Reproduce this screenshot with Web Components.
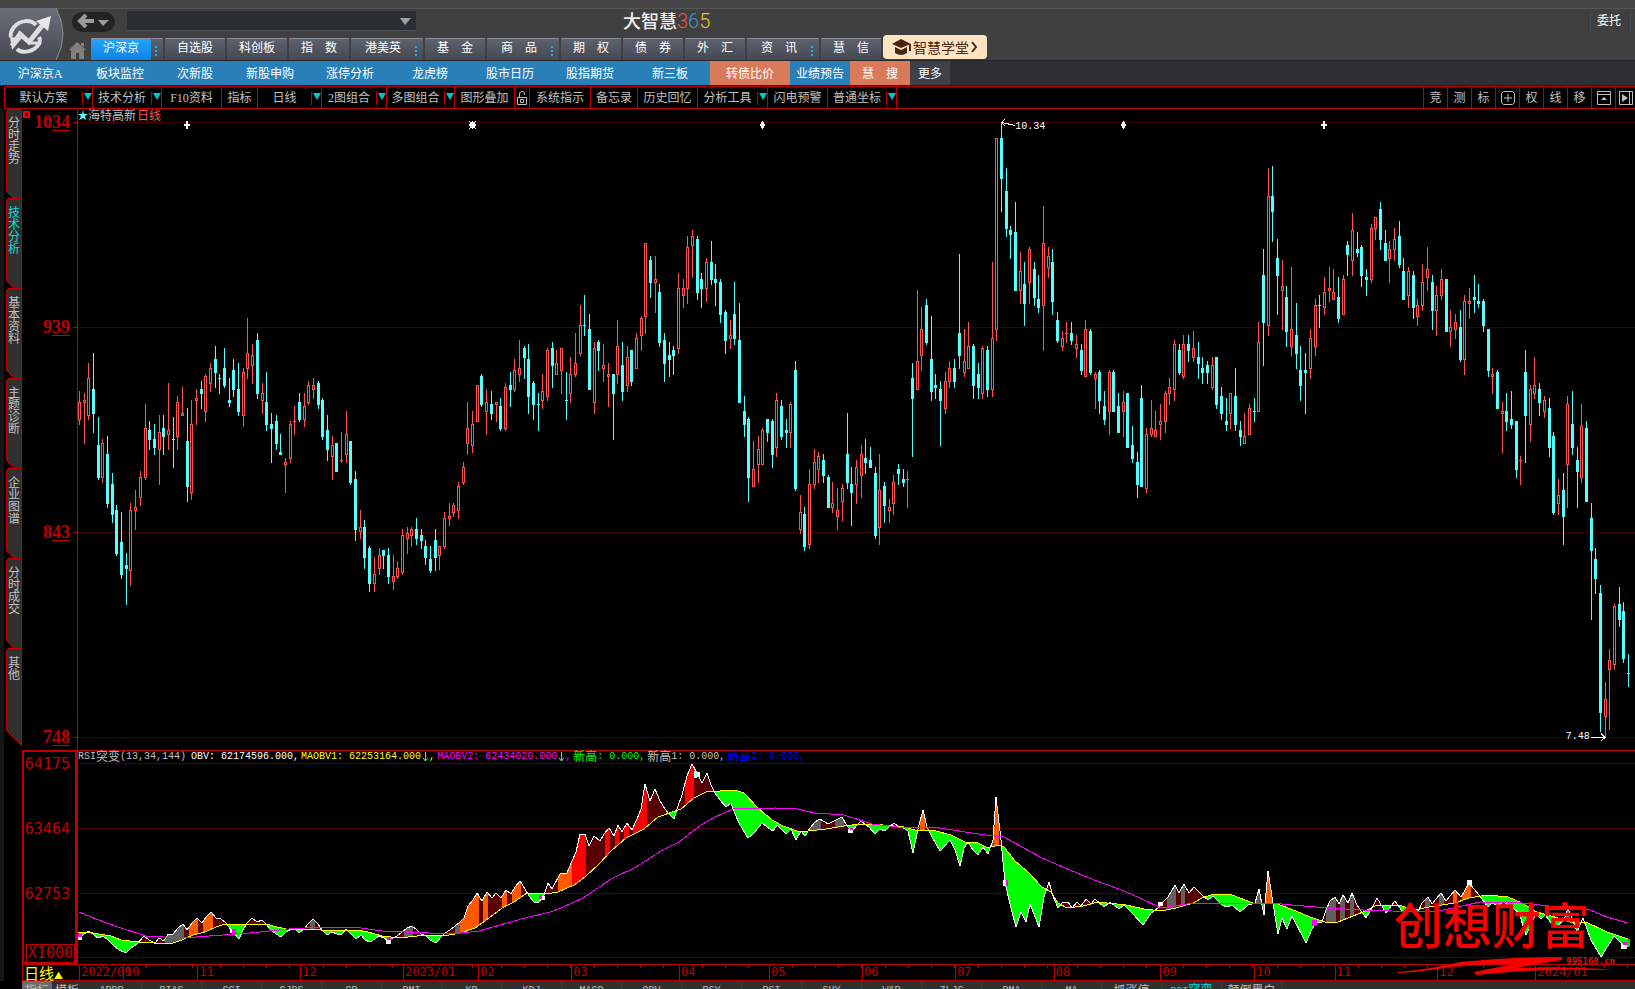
<!DOCTYPE html>
<html lang="zh-CN">
<head>
<meta charset="utf-8">
<title>大智慧365</title>
<style>
  html, body {
    margin: 0;
    height: 100%;
    background: #000;
    overflow: hidden;
  }
</style>
</head>
<body>
<dzh-app></dzh-app>

<script>
const FONT = '"Liberation Serif", "Noto Sans CJK SC", sans-serif';
const MONO = '"Liberation Mono", "Noto Sans CJK SC", monospace';

class DzhTab extends HTMLElement {
  constructor() {
    super();
    this.attachShadow({ mode: 'open' });
  }

  connectedCallback() {
    const more = this.hasAttribute('more') ? '<i></i>' : '';
    this.shadowRoot.innerHTML = `
      <style>
        :host {
          display: flex;
          flex: 0 0 60px;
          height: 22px;
          box-sizing: border-box;
          border-top: 1px solid #8a8d96;
          background: linear-gradient(#5e626d, #444853);
        }
        :host([more]) {
          flex-basis: 72px;
        }
        :host([active]) button {
          background: linear-gradient(#25a4f5, #0d84e8);
        }
        button {
          flex: 0 0 60px;
          padding: 0 0 4px;
          border: 0;
          background: none;
          color: #fff;
          font: 12px/16px ${FONT};
          white-space: pre;
        }
        :host([more]:not([active])) button {
          flex-basis: 64px;
        }
        i {
          width: 2px;
          height: 10px;
          margin: 7px 0 0 4px;
          background: repeating-linear-gradient(#18b4f0 0 2px, transparent 2px 4px);
        }
        :host([more]:not([active])) i {
          margin-left: 0;
        }
      </style>
      <button type="button"><slot></slot></button>${more}
    `;
  }
}

class DzhHeader extends HTMLElement {
  constructor() {
    super();
    this.attachShadow({ mode: 'open' });
  }

  connectedCallback() {
    this.shadowRoot.innerHTML = `
      <style>
        :host {
          display: flex;
          height: 61px;
          box-sizing: border-box;
          padding-top: 8px;
          border-bottom: 1px solid #25272a;
          background: linear-gradient(#444 8px, #555 8px, #555 9px, #404040 9px);
          font: 12px/16px ${FONT};
          color: #fff;
        }
        .logo {
          flex: 0 0 65px;
          height: 52px;
        }
        .main {
          flex: 1;
          min-width: 0;
        }
        .row {
          display: flex;
          height: 30px;
        }
        .history {
          display: flex;
          align-items: center;
          justify-content: center;
          width: 43px;
          height: 20px;
          margin: 4px 12px 0 7px;
          padding: 0;
          border: 0;
          border-radius: 10px;
          background: #232323;
        }
        .address {
          position: relative;
          width: 289px;
          height: 20px;
          margin-top: 3px;
        }
        select {
          width: 100%;
          height: 20px;
          appearance: none;
          border: 0;
          border-bottom: 1px solid #4a545c;
          background: #2b2f33;
        }
        .address svg {
          position: absolute;
          right: 5px;
          top: 7px;
          pointer-events: none;
        }
        h1 {
          flex: 1;
          margin: 1px 0 0 207px;
          color: #eee;
          font: 500 18px/22px "Noto Sans CJK SC", sans-serif;
        }
        h1 span {
          font: 300 20px/22px Roboto, sans-serif;
        }
        .trade {
          height: 25px;
          margin-right: 4px;
          padding: 0 9px 0 6px;
          border: 0;
          border-left: 1px solid #434b53;
          border-right: 1px solid #434b53;
          background: none;
          color: #fff;
          font: 12px/16px ${FONT};
        }
        nav {
          display: flex;
          gap: 2px;
          align-items: flex-end;
          height: 22px;
        }
        .home {
          width: 17px;
          height: 18px;
          margin: 0 3px 1px 4px;
        }
        .school {
          display: flex;
          align-items: center;
          height: 24px;
          margin-bottom: 1px;
          padding: 0 9px 0 8px;
          border: 0;
          border-radius: 4px;
          background: #fde5c3;
          color: #4a2410;
          font: 14px/20px "Noto Sans CJK SC", sans-serif;
        }
        .school svg:last-child {
          margin-left: 1px;
        }
      </style>
      <svg class="logo" viewBox="0 0 65 52">
        <defs>
          <linearGradient id="lg" x1="0" y1="0" x2="0" y2="1">
            <stop offset="0" stop-color="#6b6f78"/><stop offset="1" stop-color="#45484f"/>
          </linearGradient>
        </defs>
        <path d="M0 0H56Q70 26 56 52H0Z" fill="url(#lg)"/>
        <path d="M56 0Q70 26 56 52" fill="none" stroke="#888c92"/>
        <g fill="none" stroke="#dcdde0" stroke-width="4">
          <path d="M36 17C31 11 20 12 14 19 11 23 10 26 11 29"/>
          <path d="M17 41C22 46 34 44 39 36 40 34 40 31 39 29"/>
          <path d="M12 38L20 26 29 34 45 14" stroke-width="5"/>
          <path d="M28 35H41" stroke-width="3"/>
        </g>
        <path d="M36 13L51 8 48 23Z" fill="#e6e7ea"/>
        <path d="M10 29L22 30 12 42Z" fill="#dcdde0"/>
      </svg>
      <div class="main">
        <div class="row">
          <button class="history" type="button" aria-label="后退">
            <svg width="33" height="18" viewBox="0 0 33 18">
              <path d="M9 2L3 8 9 14M3 8H17" fill="none" stroke="#999" stroke-width="4"/>
              <path d="M21 7H32L26 13Z" fill="#999"/>
            </svg>
          </button>
          <div class="address">
            <select aria-label="地址"><option></option></select>
            <svg width="11" height="7" viewBox="0 0 11 7"><path d="M0 0H11L5 7Z" fill="#a0a0a0"/></svg>
          </div>
          <h1>大智慧<span style="color:#e2554d">3</span><span style="color:#3498db">6</span><span style="color:#ecc51c">5</span></h1>
          <button class="trade" type="button">委托</button>
        </div>
        <nav>
          <svg class="home" viewBox="0 0 17 18"><path d="M8 1L17 9H15V18H10V12H7V18H2V9H0ZM12 2H15V6L12 4Z" fill="#808080"/></svg>
          <dzh-tab active more>沪深京</dzh-tab>
          <dzh-tab>自选股</dzh-tab>
          <dzh-tab>科创板</dzh-tab>
          <dzh-tab>指　数</dzh-tab>
          <dzh-tab more>港美英</dzh-tab>
          <dzh-tab>基　金</dzh-tab>
          <dzh-tab more>商　品</dzh-tab>
          <dzh-tab>期　权</dzh-tab>
          <dzh-tab>债　券</dzh-tab>
          <dzh-tab>外　汇</dzh-tab>
          <dzh-tab more>资　讯</dzh-tab>
          <dzh-tab>慧　信</dzh-tab>
          <button class="school" type="button">
            <svg width="22" height="18" viewBox="0 0 22 18" fill="#4a2410">
              <path d="M1 6L10 1 20 6 10 10ZM4 9L10 12 16 9V15Q10 19 4 15ZM18 6H20V13H18Z"/>
            </svg>智慧学堂
            <svg width="8" height="14" viewBox="0 0 8 14"><path d="M2 2L6 7 2 12" fill="none" stroke="#4a2410" stroke-width="2"/></svg>
          </button>
        </nav>
      </div>
    `;
  }
}

class DzhSubnav extends HTMLElement {
  constructor() {
    super();
    this.attachShadow({ mode: 'open' });
  }

  connectedCallback() {
    this.shadowRoot.innerHTML = `
      <style>
        :host {
          display: flex;
          height: 25px;
          box-sizing: border-box;
          border-bottom: 1px solid #1d1f22;
          background: #2c2f34;
          font: 12px/24px ${FONT};
        }
        a {
          flex: 0 0 80px;
          box-sizing: border-box;
          height: 24px;
          padding-top: 1px;
          background: #2980b9;
          color: #fff;
          text-align: center;
          text-decoration: none;
        }
        .w70 { flex-basis: 70px; }
        .w60 { flex-basis: 60px; }
        .w40 { flex-basis: 40px; background: #3e4248; }
        .hot { background: #d97b5b; }
      </style>
      <a href="#">沪深京A</a>
      <a href="#">板块监控</a>
      <a href="#" class="w70">次新股</a>
      <a href="#">新股申购</a>
      <a href="#">涨停分析</a>
      <a href="#">龙虎榜</a>
      <a href="#">股市日历</a>
      <a href="#">股指期货</a>
      <a href="#">新三板</a>
      <a href="#" class="hot">转债比价</a>
      <a href="#" class="w60">业绩预告</a>
      <a href="#" class="w60 hot">慧　搜</a>
      <a href="#" class="w40">更多</a>
    `;
  }
}

class DzhToolbar extends HTMLElement {
  constructor() {
    super();
    this.attachShadow({ mode: 'open' });
  }

  connectedCallback() {
    // [label, width, has drop-down]
    const tools = [
      ['默认方案', 88, 1], ['技术分析', 69, 1], ['F10资料', 60], ['指标', 36], ['日线', 64, 1],
      ['2图组合', 65, 1], ['多图组合', 68, 1], ['图形叠加', 60], ['lock', 15], ['系统指示', 61],
      ['备忘录', 47], ['历史回忆', 60], ['分析工具', 70, 1], ['闪电预警', 60], ['普通坐标', 69, 1]
    ];
    const right = ['竞', '测', '标', 'plus', '权', '线', '移', 'up', 'next'];
    const icons = {
      lock: '<svg width="12" height="16"><path d="M3.500 7V4Q3.500 1.500 6 1.500T8.500 4V5M1.500 7.500H10.500V14.500H1.500ZM4.500 9.500H7.500V12.500H4.500Z"/></svg>',
      plus: '<svg width="14" height="14"><path d="M2.500.5H11.500L13.500 2.500V11.500L11.500 13.500H2.500L.5 11.500V2.500ZM7 3V11M3 7H11"/></svg>',
      up: '<svg width="14" height="14"><path d="M.5.5H13.500V13.500H.5ZM0 3.500H14"/><path d="M4 9H10L7 6Z" class="solid"/></svg>',
      next: '<svg width="14" height="14"><path d="M.5.5H13.500V13.500H.5ZM10.500 0V14"/><path d="M3 3L9 7 3 11Z" class="solid"/></svg>'
    };
    const label = t => icons[t] || t;
    const aria = t => icons[t] ? ` aria-label="${t}"` : '';
    this.shadowRoot.innerHTML = `
      <style>
        :host {
          display: flex;
          justify-content: space-between;
          height: 23px;
          box-sizing: border-box;
          margin-left: 4px;
          border: solid #c00000;
          border-width: 1px 0 1px 1px;
          overflow: hidden;
        }
        div {
          display: flex;
        }
        button {
          display: flex;
          box-sizing: border-box;
          align-items: center;
          justify-content: center;
          padding: 1px 0 0;
          border: 0;
          border-right: 1px solid #c00000;
          background: none;
          color: #c0c0c0;
          font: 12px/20px ${FONT};
        }
        button span {
          flex: 1;
        }
        .arrow {
          flex: 0 0 9px;
          height: 13px;
          border-left: 1px solid #c00000;
        }
        .right button {
          width: 24px;
          border-right: 0;
          border-left: 1px solid #c00000;
        }
        .right button:last-child {
          width: 20px;
        }
        svg {
          fill: none;
          stroke: #c0c0c0;
        }
        .solid, .arrow path {
          stroke: none;
          fill: #c0c0c0;
        }
        .arrow path {
          fill: #00c8c8;
        }
      </style>
      <div>${tools.map(([t, w, drop]) => `<button type="button" style="width:${w}px"${aria(t)}>` +
        (drop ? `<span>${t}</span><svg class="arrow" viewBox="0 0 9 13"><path d="M1 1H9L5 8Z"/></svg>` : label(t)) +
        '</button>').join('')}</div>
      <div class="right">${right.map(t => `<button type="button"${aria(t)}>${label(t)}</button>`).join('')}</div>
    `;
  }
}

class DzhSideTabs extends HTMLElement {
  constructor() {
    super();
    this.attachShadow({ mode: 'open' });
  }

  connectedCallback() {
    const tabs = ['分时走势', '技术分析', '基本资料', '主题诊断', '企业图谱', '分时成交', '其他'];
    this.shadowRoot.innerHTML = `
      <style>
        :host {
          display: block;
          flex: 0 0 22px;
          box-sizing: border-box;
          padding-left: 6px;
          background: linear-gradient(90deg, #161616 4px, #000 4px);
        }
        button {
          position: relative;
          display: block;
          width: 16px;
          height: 90px;
          padding: 8px 1px 0 2px;
          border: 0;
          background: none;
          color: #c0c0c0;
          font: 12px/12px ${FONT};
          text-align: left;
        }
        button:first-of-type {
          height: 89px;
          padding-top: 7px;
        }
        span {
          position: relative;
          display: block;
          width: 12px;
          height: 81px;
          word-break: break-all;
        }
        .active {
          color: #00e0e0;
        }
        svg {
          position: absolute;
          left: 0;
          top: 0;
          overflow: visible;
          fill: #303030;
          stroke: #c00000;
        }
      </style>
      ${tabs.map((t, i) => `<button type="button"${i === 1 ? ' class="active"' : ''}>
        <svg width="16" height="98"><path d="M15.500.5H2L.5 2.500V82.500L15.500 97.500Z"/></svg><span>${t}</span></button>`).join('')}
    `;
  }
}

const SVG_W = 1557;
const LEFT = 78;
// distance between two trading days
const STEP = 4.68;

// u = close above open, d = close below; then high, body top, body bottom, low
const CANDLES = `
u391 402 420 425,u393 400 403 444,u363 378 416 420,d353 389 414 433,d417 445 478 480,u439 443 478 483,
d436 454 504 508,d473 484 515 523,d505 510 554 556,d512 542 575 579,d553 565 569 605,u503 510 571 586,
u490 507 511 530,u471 477 498 506,u404 428 478 480,d421 430 440 450,d424 439 448 455,u415 432 450 485,
d415 428 437 455,u383 430 435 450,d417 439 440 468,u396 402 437 450,u387 413 416 416,d408 441 487 502,
u400 424 493 500,u389 398 401 425,d381 389 394 409,u374 376 412 422,u363 368 384 392,d346 359 373 388,
d374 378 379 394,d348 368 386 388,d378 400 403 407,d359 370 390 397,d363 389 412 416,u368 372 416 427,
u318 353 369 379,u344 355 366 384,d333 340 394 399,u383 393 401 414,d372 402 425 431,d413 424 429 463,
d415 421 444 450,d434 452 455 455,u458 462 465 493,u421 424 459 463,u406 421 422 435,d393 402 420 422,
u393 406 420 427,u381 385 403 405,u378 385 390 399,d381 383 405 409,d398 400 437 440,d415 430 450 461,
u436 445 457 480,d443 443 472 472,u432 460 461 463,u411 434 455 463,d441 441 483 485,d471 479 530 541,
u510 527 532 539,d520 527 558 569,d546 548 584 592,u557 574 584 592,u548 555 569 575,d550 550 556 569,
d548 555 577 584,u555 576 582 590,u561 568 577 579,u529 535 573 575,u527 533 539 554,u527 529 536 547,
d518 529 539 545,d529 535 541 549,d540 546 558 565,d546 559 571 573,d529 540 558 571,u546 546 556 570,
u512 518 547 549,u503 516 519 526,u503 505 513 517,u482 486 511 519,u462 467 483 485,u402 428 444 455,
u411 424 446 453,u385 385 422 422,d374 376 405 407,u389 402 412 435,d391 404 414 420,u402 402 405 422,
d398 406 429 431,u383 387 429 431,d372 385 390 407,u359 370 390 392,u340 368 375 382,d346 348 358 379,
d344 359 397 414,d381 383 405 420,d393 404 405 431,u374 391 401 409,u348 350 397 401,d342 348 366 388,
u350 363 375 375,u348 348 371 394,d372 400 401 420,u357 374 394 403,u333 363 375 377,u305 325 354 356,
d295 325 326 336,d314 329 390 390,u342 348 403 414,d340 342 351 371,u344 365 369 382,u363 374 377 407,
d374 374 394 440,u320 346 375 384,d342 365 392 401,u346 357 386 392,d350 350 382 386,u333 338 369 369,
u316 318 336 351,u243 243 317 334,d256 260 283 298,u256 279 283 313,d284 292 343 347,d333 340 364 382,
d342 355 360 377,d346 350 356 375,u273 288 349 354,u279 288 296 308,u236 247 289 304,u230 236 246 278,
d236 239 293 300,d273 279 289 308,u258 262 289 302,d241 262 280 285,d264 279 283 306,d279 282 315 323,
d310 312 341 354,u320 335 339 349,d282 314 339 345,d303 340 403 403,d396 411 425 437,d417 419 478 502,
u441 469 487 487,u436 449 465 483,u428 430 465 465,d419 419 433 442,d419 421 455 468,u393 400 448 457,
d400 406 437 440,d419 430 433 448,u402 404 433 448,d361 370 489 491,u495 512 530 534,d507 514 547 551,
u469 484 545 549,u449 462 485 489,u452 456 470 483,d454 460 476 483,d475 477 508 508,u482 503 508 513,
u488 510 517 530,u484 488 502 521,d413 454 483 489,d467 484 493 526,u460 467 485 504,u445 454 476 498,
d439 458 463 474,d447 460 468 468,d467 473 536 539,u454 490 528 545,d482 486 506 523,u499 507 511 523,
u475 482 504 515,d464 469 474 485,d469 479 483 487,u471 479 480 508,d363 378 399 457,u290 361 390 390,
u307 329 356 371,d299 305 343 345,d316 359 392 401,d374 385 388 399,d381 389 401 446,u372 381 409 414,
u361 368 382 388,d359 368 382 388,d254 333 356 369,u329 361 373 377,u322 346 369 369,d344 346 386 399,
d363 374 388 399,u346 348 394 399,d346 350 390 397,u262 338 390 397,u138 138 330 341,d123 138 179 212,
d168 191 229 237,d226 230 235 259,d202 232 291 291,u252 271 291 304,d262 284 304 326,u247 249 283 304,
d262 269 298 306,d275 299 308 313,u206 243 306 351,u247 256 268 278,d249 262 302 315,d312 320 341 343,
u331 338 347 351,u322 333 334 343,d322 333 341 345,u335 344 349 358,d344 350 371 375,u320 329 377 377,
d329 331 373 375,u372 374 379 409,d370 372 401 414,d391 406 420 425,u370 372 412 435,d370 372 412 412,
d393 406 433 433,u391 402 412 437,d393 393 448 448,d426 445 459 463,d452 462 485 498,d385 398 487 487,
u428 434 489 493,u400 428 435 437,u411 430 437 437,u404 421 425 440,u391 393 422 433,u378 387 394 405,
u340 344 390 401,d344 350 373 375,u335 344 377 379,d335 344 351 362,u331 348 358 362,d342 357 364 379,
d357 368 373 384,d361 365 373 384,u357 365 388 390,d357 357 405 409,d387 396 414 420,d398 421 425 431,
u393 393 414 429,d368 396 425 431,d421 430 437 446,u413 436 444 444,u404 408 435 435,d398 411 412 422,
u322 342 412 412,d249 275 323 366,u168 196 326 336,d166 196 212 242,d239 258 276 315,u260 286 291 330,
d286 297 332 347,u267 329 347 356,d303 335 354 369,d346 370 386 401,d353 370 373 414,u329 338 369 379,
u299 305 347 356,d295 305 306 328,u277 292 308 315,u267 288 291 302,u269 292 300 300,d277 297 319 323,
u275 279 315 315,d241 245 255 276,u213 230 261 276,d232 249 253 257,d245 247 276 287,d269 277 280 296,
u224 228 280 283,u217 217 229 240,d202 209 240 250,d230 243 261 261,u241 249 259 283,u228 239 250 261,
d221 236 265 268,d258 271 300 300,u267 271 296 308,d271 275 308 319,u299 305 317 326,u264 282 306 311,
u247 269 278 291,d275 282 311 330,u286 295 311 336,u269 279 296 300,d279 279 332 332,u310 327 332 347,
u314 322 330 339,d310 327 360 362,u295 301 360 375,u288 301 304 319,d275 297 300 313,d284 301 304 308,
d299 301 326 332,d329 329 371 377,u368 374 377 394,d370 372 409 409,u402 411 414 453,d393 411 422 431,
d391 419 425 429,d421 421 470 478,u456 460 461 485,d350 372 416 463,u385 389 425 442,u357 385 394 399,
d383 389 403 416,u396 400 412 418,d398 408 448 457,d432 436 513 515,u479 495 504 515,d473 490 517 545,
u396 404 465 508,d391 424 448 455,d447 460 472 508,u404 426 478 483,d421 428 502 502,d503 518 551 620,
d548 559 579 594,d585 593 713 732,u682 699 717 737,u649 660 670 730,u604 606 665 670,d587 604 620 627,
d602 611 659 663,d654 673 674 687`.trim().split(/,\s*/);

class PriceChart extends HTMLElement {
  constructor() {
    super();
    this.attachShadow({ mode: 'open' });
  }

  candles() {
    let up = '';
    let down = '';
    CANDLES.forEach((c, i) => {
      const x = 79 + Math.round(i * STEP);
      const [hi, top, bot, lo] = c.slice(1).split(' ').map(Number);
      const wick = (a, b) => b > a ? `M${x} ${a}h1V${b}h-1Z` : '';
      const body = `M${x - 1} ${top}h3V${bot}h-3Z`;
      if (c[0] === 'u') {
        const hole = bot - top > 2 ? `M${x} ${top + 1}V${bot - 1}h1V${top + 1}Z` : '';
        up += wick(hi, top) + body + hole + wick(bot, lo);
      } else {
        down += wick(hi, top) + body + wick(bot, lo);
      }
    });
    return `<path fill="#ff5454" fill-rule="evenodd" d="${up}"/><path fill="#54ffff" d="${down}"/>`;
  }

  connectedCallback() {
    this.shadowRoot.innerHTML = `
      <style>
        :host {
          display: flex;
          min-height: 0;
          color: #c0c0c0;
          font: 12px/12px ${FONT};
        }
        .axis {
          position: relative;
          display: flex;
          flex: 0 0 56px;
          flex-direction: column;
          justify-content: space-between;
          align-items: flex-end;
          box-sizing: border-box;
          border-right: 1px solid #c00000;
          color: #c00000;
          font: bold 18px/26px "Liberation Serif", serif;
        }
        .axis span {
          display: flex;
          align-items: center;
        }
        .axis span::after {
          content: "";
          width: 4px;
          height: 1px;
          margin-left: 3px;
          background: #c00000;
        }
        .axis u {
          text-decoration-thickness: 1px;
          text-underline-offset: 2px;
        }
        .dot {
          position: absolute;
          left: 1px;
          top: 2px;
          width: 3px;
          height: 3px;
          border: 2px solid #f00;
        }
        .plot {
          position: relative;
          flex: 1;
          min-width: 0;
        }
        .plot > svg {
          display: block;
          width: 100%;
          height: 100%;
        }
        h2 {
          position: absolute;
          left: 0;
          top: 0;
          display: flex;
          margin: 0;
          font: 12px/14px ${FONT};
        }
        h2 b {
          margin-left: 1px;
          color: #ff5454;
          font-weight: normal;
        }
        .tag {
          position: absolute;
          color: #fff;
          font: 10px/10px ${MONO};
        }
        .high { left: 60.2%; top: 2%; }
        .low { right: 2.9%; bottom: 1.2%; }
      </style>
      <div class="axis">
        <i class="dot"></i>
        <span>10<u>34</u></span><span>9<u>39</u></span><span>8<u>43</u></span><span>7<u>48</u></span>
      </div>
      <div class="plot">
        <svg viewBox="${LEFT} 109 ${SVG_W} 641" preserveAspectRatio="none" shape-rendering="crispEdges">
          <path d="M78 122.500H1635M78 327.500H1635M78 532.500H1635M78 737.500H1635" stroke="#400000"/>
          ${this.candles()}
          <g fill="#fff">
            <path d="M184 124h2v-3h2v3h2v2h-2v3h-2v-3h-2Z"/>
            <path d="M470 122h5v6h-5ZM472 121h1v8h-1ZM469 124h7v2h-7ZM469 121h1v1h-1ZM475 121h1v1h-1ZM469 128h1v1h-1ZM475 128h1v1h-1Z"/>
            <path d="M762 121h1v1h1v2h1v2h-1v2h-1v1h-1v-1h-1v-2h-1v-2h1v-2h1Z"/>
            <path d="M1123 121h1v1h1v2h1v2h-1v2h-1v1h-1v-1h-1v-2h-1v-2h1v-2h1Z"/>
            <path d="M1321 124h2v-3h2v3h2v2h-2v3h-2v-3h-2Z"/>
          </g>
          <path d="M1005 119L1002 122.500 1005 126M1002 122.500L1015 125.500M1591 737.500H1605M1601 733.500L1605 737.500 1601 741" fill="none" stroke="#fff"/>
        </svg>
        <h2><svg width="10" height="12"><path d="M5 1L6 5H10L7 7 8 11 5 9 1 11 3 7 0 5H4Z" fill="#54ffff"/></svg>海特高新<b>日线</b></h2>
        <span class="tag high">10.34</span>
        <span class="tag low">7.48</span>
      </div>
    `;
  }
}

const points = s => s.trim().split(/\s+/).map(p => p.split(',').map(Number));

const OBV = points(`
79,939 84,934 89,931 94,935 98,938 103,936 108,940 113,945 119,950 126,953 131,948 137,944 144,936 149,940
155,943 159,938 164,941 168,934 173,934 178,928 183,924 187,930 192,923 197,918 202,923 206,917 211,912 216,918
221,919 226,923 231,930 239,939 243,930 247,923 252,918 257,922 262,920 266,924 271,930 276,934 281,937 286,932
290,930 295,929 299,933 304,929 308,924 313,919 318,924 322,930 327,935 332,932 337,934 342,934 346,929 351,934
356,939 361,935 365,940 370,942 375,939 379,936 384,938 388,941 393,938 397,936 402,932 407,928 412,926 417,930
421,934 426,936 430,940 436,943 441,937 445,933 450,930 455,926 460,922 464,918 468,906 473,900 477,893 482,901
487,892 492,898 496,893 501,898 506,890 511,894 515,887 520,881 525,889 529,896 534,902 539,902 544,895 548,883
552,889 560,874 567,873 572,861 576,852 580,834 585,834 589,846 594,836 600,841 604,834 609,828 614,836 618,825
622,832 627,823 632,830 637,819 641,809 645,784 650,801 655,789 660,801 665,809 669,814 674,819 678,806 682,795
687,776 692,764 697,773 702,783 707,773 711,785 715,793 720,800 726,807 731,803 735,814 739,823 748,838 754,833
762,823 767,827 773,831 777,825 782,830 786,834 791,829 796,840 801,831 805,836 810,828 815,822 820,819 828,824
834,821 842,817 847,826 852,831 857,825 861,821 869,827 875,834 880,829 885,831 889,827 894,823 898,826 903,828
908,831 913,853 918,829 923,810 927,827 932,837 940,851 950,840 955,850 960,866 964,848 968,842 973,850 978,855
983,847 988,854 993,840 996,797 1001,840 1005,883 1011,908 1016,927 1021,912 1026,922 1030,904 1039,927 1044,897
1049,882 1053,896 1058,908 1063,902 1068,902 1072,908 1077,902 1081,906 1086,899 1091,904 1095,899 1104,907
1110,902 1119,909 1124,905 1133,914 1143,925 1151,913 1158,908 1161,904 1168,897 1175,885 1179,893 1184,884
1189,893 1194,887 1202,895 1208,900 1213,896 1222,905 1227,907 1232,905 1240,912 1248,905 1255,903 1259,889
1264,915 1268,871 1273,903 1278,934 1282,918 1287,929 1292,916 1306,943 1312,929 1317,922 1322,922 1326,910
1330,901 1335,897 1339,904 1343,895 1348,903 1352,893 1357,905 1361,911 1366,918 1372,908 1377,898 1386,913
1395,901 1405,915 1409,908 1418,912 1422,903 1428,897 1432,904 1441,893 1446,901 1455,890 1461,897 1469,883
1479,895 1488,907 1492,903 1498,906 1503,902 1510,906 1519,913 1526,935 1536,914 1541,919 1545,915 1555,928
1564,920 1568,908 1573,921 1577,932 1583,918 1591,940 1601,957 1614,936 1622,944 1628,947`);

const MA1 = points(`
78,932 93,933 111,936 121,940 138,942 154,943 173,943 182,940 193,935 205,932 216,927 225,924 266,924 277,927
286,929 314,929 329,931 357,930 368,932 382,936 400,938 425,935 443,936 461,933 475,928 489,918 502,908 514,902
527,893 546,894 558,892 574,885 585,877 599,864 611,851 626,838 644,829 658,817 681,809 694,798 706,792 735,790
744,793 758,808 772,820 783,826 797,831 808,831 826,829 844,826 861,824 883,825 904,827 915,830 936,831 951,835
965,842 976,842 988,848 998,845 1004,847 1015,861 1028,872 1042,887 1051,892 1058,903 1067,908 1083,906 1098,902
1126,905 1144,909 1161,911 1176,908 1193,903 1204,897 1215,894 1232,895 1253,903 1275,903 1296,911 1310,917
1328,923 1338,922 1363,912 1377,905 1399,905 1415,910 1429,907 1455,903 1469,898 1487,895 1508,897 1522,903
1537,912 1558,918 1570,922 1586,922 1607,932 1628,939`);

const MA2 = points(`
79,912 96,919 118,927 146,936 164,937 196,937 250,933 289,929 321,927 354,927 382,931 429,933 461,933 479,931
500,925 525,918 550,912 561,908 583,898 611,879 636,867 661,851 679,842 701,825 715,817 733,809 776,808 797,809
815,813 844,815 872,824 897,827 940,828 965,832 986,835 1004,837 1040,857 1065,868 1094,880 1119,889 1140,898
1161,908 1193,903 1222,903 1271,903 1292,905 1328,908 1363,910 1392,911 1434,912 1462,906 1480,902 1522,903
1558,907 1590,910 1607,917 1628,923`);

// colour runs of the area above the average; everything else is dark red
const RUNS = {
  '#606060': [[165, 184], [310, 315], [404, 413], [455, 460], [810, 821], [835, 844], [991, 994], [1167, 1176],
    [1181, 1185], [1256, 1261], [1326, 1336], [1340, 1345], [1350, 1354], [1425, 1430], [1439, 1444], [1566, 1570]],
  '#ff5a00': [[189, 198], [203, 213], [460, 479], [483, 488], [502, 507], [512, 521], [558, 572], [920, 925],
    [994, 999], [1266, 1272], [1453, 1457], [1462, 1471]],
  '#ff0000': [[572, 586], [605, 610], [615, 619], [624, 629], [633, 647], [685, 694]]
};

class ObvChart extends HTMLElement {
  constructor() {
    super();
    this.attachShadow({ mode: 'open' });
  }

  at(line, x) {
    const i = line.findIndex(p => p[0] >= x);
    if (i <= 0) return line[i < 0 ? line.length - 1 : 0][1];
    const [x0, y0] = line[i - 1];
    const [x1, y1] = line[i];
    return Math.round(y0 + (y1 - y0) * (x - x0) / (x1 - x0));
  }

  area() {
    const paths = {};
    for (let x = 79; x < 1629; x++) {
      const a = this.at(OBV, x);
      const b = this.at(MA1, x);
      let color = '#00ff00';
      if (a < b) {
        color = Object.keys(RUNS).find(k => RUNS[k].some(r => x >= r[0] && x < r[1])) || '#580000';
      }
      paths[color] = (paths[color] || '') + `M${x} ${a}h1V${b}h-1Z`;
    }
    return Object.keys(paths).map(k => `<path fill="${k}" d="${paths[k]}"/>`).join('');
  }

  connectedCallback() {
    const arrow = '<svg width="8" height="12"><path d="M4.500 1V10M2 7L4.500 10 7 7" fill="none" stroke="#54ff54"/></svg>';
    this.shadowRoot.innerHTML = `
      <style>
        :host {
          display: flex;
          min-height: 0;
          color: #c0c0c0;
          font: 10px/12px ${MONO};
        }
        .axis {
          display: flex;
          flex: 0 0 56px;
          flex-direction: column;
          gap: 43px;
          align-items: flex-end;
          box-sizing: border-box;
          padding-top: 1px;
          border: 2px solid #c00000;
          border-right-width: 3px;
          color: #c00000;
          font: 15px/22px "DejaVu Sans Mono", monospace;
        }
        .axis span {
          padding-right: 5px;
        }
        .axis b {
          box-sizing: border-box;
          height: 19px;
          margin-top: -4px;
          padding: 0 1px;
          border: 1px solid #c00000;
          font: 15px/17px "DejaVu Sans Mono", monospace;
        }
        .plot {
          position: relative;
          flex: 1;
          min-width: 0;
          border-top: 1px solid #c00000;
        }
        .plot > svg {
          display: block;
          width: 100%;
          height: 100%;
        }
        .legend {
          position: absolute;
          left: 0;
          top: 0;
          display: flex;
          gap: 2px;
          white-space: pre;
        }
        .legend span {
          display: flex;
        }
        .legend span:first-child {
          margin-right: 3px;
        }
        big {
          font: 12px/12px ${FONT};
        }
      </style>
      <div class="axis"><span>64175</span><span>63464</span><span>62753</span><b>X1000</b></div>
      <div class="plot">
        <svg viewBox="${LEFT} 751 ${SVG_W} 213" preserveAspectRatio="none" shape-rendering="crispEdges">
          <path d="M78 763.500H1635M78 828.500H1635M78 893.500H1635M78 957.500H1635" stroke="#480000"/>
          ${this.area()}
          <g fill="none">
            <polyline points="${OBV.join(' ')}" stroke="#fff"/>
            <polyline points="${MA1.join(' ')}" stroke="#ff0"/>
            <polyline points="${MA2.join(' ')}" stroke="#f0f"/>
          </g>
          <path fill="#fff" d="M78 936h4v4h-4ZM230 929h4v4h-4ZM386 940h5v4h-5ZM541 896h4v4h-4ZM697 772h3v5h-3ZM848 829h5v4h-5ZM1003 880h3v6h-3ZM1158 902h5v4h-5ZM1467 880h5v5h-5ZM1621 944h6v5h-6Z"/>
          <path fill="#f0f" d="M78 934h4v3h-4ZM232 929h4v5h-4ZM387 937h4v3h-4ZM539 895h3v4h-3ZM850 828h3v2h-3ZM1006 880h2v6h-2ZM1312 920h5v6h-5ZM1623 942h5v3h-5Z"/>
          <path fill="#aff" d="M694 771h3v7h-3Z"/>
          <path fill="#00e000" d="M1627 939h3v7h-3Z"/>
        </svg>
        <div class="legend">
          <span>RSI<big>突变</big>(13,34,144)</span>
          <span style="color:#fff">OBV: 62174596.000,</span>
          <span style="color:#ff0">MAOBV1: 62253164.000${arrow},</span>
          <span style="color:#f0f">MAOBV2: 62434020.000${arrow},</span>
          <span style="color:#0f0"><big>新高</big>: 0.000,</span>
          <span><big>新高</big>1: 0.000,</span>
          <span style="color:#00f"><big>新高</big>2: 0.000,</span>
        </div>
      </div>
    `;
  }
}

class TimeAxis extends HTMLElement {
  constructor() {
    super();
    this.attachShadow({ mode: 'open' });
  }

  connectedCallback() {
    const months = [['2022/09', 43], ['10', 74], ['11', 103], ['12', 103], ['2023/01', 75], ['02', 93], ['03', 108],
      ['04', 90], ['05', 93], ['06', 93], ['07', 99], ['08', 107], ['09', 94], ['10', 80], ['11', 103], ['12', 98],
      ['2024/01', 100]];
    this.shadowRoot.innerHTML = `
      <style>
        :host {
          display: flex;
          box-sizing: border-box;
          height: 17px;
          border-top: 1px solid #c00000;
          border-bottom: 1px solid #c00000;
          color: #c00000;
          font: 12px/15px "DejaVu Sans Mono", monospace;
        }
        button {
          flex: 0 0 57px;
          padding: 0 0 0 1px;
          border: 0;
          border-left: 1px solid #c00000;
          background: none;
          color: #ff0;
          font: 15px/15px "Noto Sans CJK SC", sans-serif;
          text-align: left;
          white-space: nowrap;
        }
        small {
          font-size: 9px;
        }
        ol {
          display: flex;
          flex: 1;
          min-width: 0;
          margin: 0;
          padding: 0;
          list-style: none;
        }
        li {
          min-width: 0;
          border-left: 1px solid #c00000;
          padding-left: 1px;
          background: repeating-linear-gradient(90deg, transparent 0 22px, #c00000 22px 23px) 0 0 / 100% 3px no-repeat;
        }
      </style>
      <button type="button">日线<small>▲</small></button>
      <ol>${months.map(([m, w]) => `<li style="flex:${w} 1 0">${m}</li>`).join('')}</ol>
    `;
  }
}

class IndicatorTabs extends HTMLElement {
  constructor() {
    super();
    this.attachShadow({ mode: 'open' });
  }

  connectedCallback() {
    const names = ['ARBR', 'BIAS', 'CCI', 'CJBS', 'CR', 'DMI', 'KD', 'KDJ', 'MACD', 'OBV', 'PSY', 'RSI', 'SHY',
      'W&amp;R', 'ZLJC', 'DMA', 'MA', '抓涨停', 'RSI<big>突变</big>', '颠倒黑白'];
    this.shadowRoot.innerHTML = `
      <style>
        :host {
          display: flex;
          flex: 0 0 8px;
          margin-left: 22px;
          background: #303030;
          overflow: hidden;
        }
        button {
          flex: 0 0 60px;
          box-sizing: border-box;
          height: 20px;
          padding: 0;
          border: 0;
          border-right: 1px solid #c00000;
          background: #303030;
          color: #c0c0c0;
          font: 10px/16px ${MONO};
        }
        button.cjk, big {
          font: 12px/16px ${FONT};
        }
        .mode {
          flex-basis: 30px;
          border-right: 0;
        }
        .on {
          background: #6c6c6c;
        }
        .active {
          color: #00e0e0;
        }
      </style>
      <button type="button" class="mode cjk on">指标</button>
      <button type="button" class="mode cjk">模板</button>
      ${names.map((n, i) => `<button type="button" class="${i === 17 || i === 19 ? 'cjk' : ''}${i === 18 ? 'active' : ''}">${n}</button>`).join('')}
    `;
  }
}

class DzhWatermark extends HTMLElement {
  constructor() {
    super();
    this.attachShadow({ mode: 'open' });
  }

  connectedCallback() {
    this.shadowRoot.innerHTML = `
      <style>
        :host {
          display: block;
          width: 219px;
          color: #f80000;
          pointer-events: none;
        }
        b {
          display: block;
          margin-left: -4px;
          font: 500 49px/56px "Noto Sans CJK SC", sans-serif;
        }
        svg {
          display: block;
          margin-top: 5px;
        }
        span {
          position: absolute;
          right: 2px;
          top: 60px;
          color: #e01010;
          font: bold 9px/12px "DejaVu Sans Mono", monospace;
        }
      </style>
      <b>创想财富</b>
      <svg width="219" height="22" viewBox="0 0 219 22" fill="#f80000">
        <path d="M0 16Q40 12 62 6 110 1 164 1L164 4 118 12Q170 10 216 14 150 13 112 16L78 19 76 16 116 8Q70 8 40 13 20 16 0 17Z"/>
      </svg>
      <span>995168.cn</span>
    `;
  }
}

class DzhApp extends HTMLElement {
  constructor() {
    super();
    this.attachShadow({ mode: 'open' });
  }

  connectedCallback() {
    this.shadowRoot.innerHTML = `
      <style>
        :host {
          position: relative;
          display: flex;
          flex-direction: column;
          height: 100vh;
          background: #000;
          overflow: hidden;
        }
        .work {
          display: flex;
          flex: 1;
          min-height: 0;
        }
        .charts {
          display: flex;
          flex: 1;
          flex-direction: column;
          min-width: 0;
        }
        price-chart { flex: 641 1 0; }
        obv-chart { flex: 214 1 0; }
        dzh-watermark {
          position: absolute;
          right: 18px;
          bottom: 11px;
        }
      </style>
      <dzh-header></dzh-header>
      <dzh-subnav></dzh-subnav>
      <dzh-toolbar></dzh-toolbar>
      <div class="work">
        <dzh-side-tabs></dzh-side-tabs>
        <div class="charts">
          <price-chart></price-chart>
          <obv-chart></obv-chart>
          <time-axis></time-axis>
        </div>
      </div>
      <indicator-tabs></indicator-tabs>
      <dzh-watermark></dzh-watermark>
    `;
  }
}

customElements.define('dzh-tab', DzhTab);
customElements.define('dzh-header', DzhHeader);
customElements.define('dzh-subnav', DzhSubnav);
customElements.define('dzh-toolbar', DzhToolbar);
customElements.define('dzh-side-tabs', DzhSideTabs);
customElements.define('price-chart', PriceChart);
customElements.define('obv-chart', ObvChart);
customElements.define('time-axis', TimeAxis);
customElements.define('indicator-tabs', IndicatorTabs);
customElements.define('dzh-watermark', DzhWatermark);
customElements.define('dzh-app', DzhApp);
</script>
</body>
</html>
